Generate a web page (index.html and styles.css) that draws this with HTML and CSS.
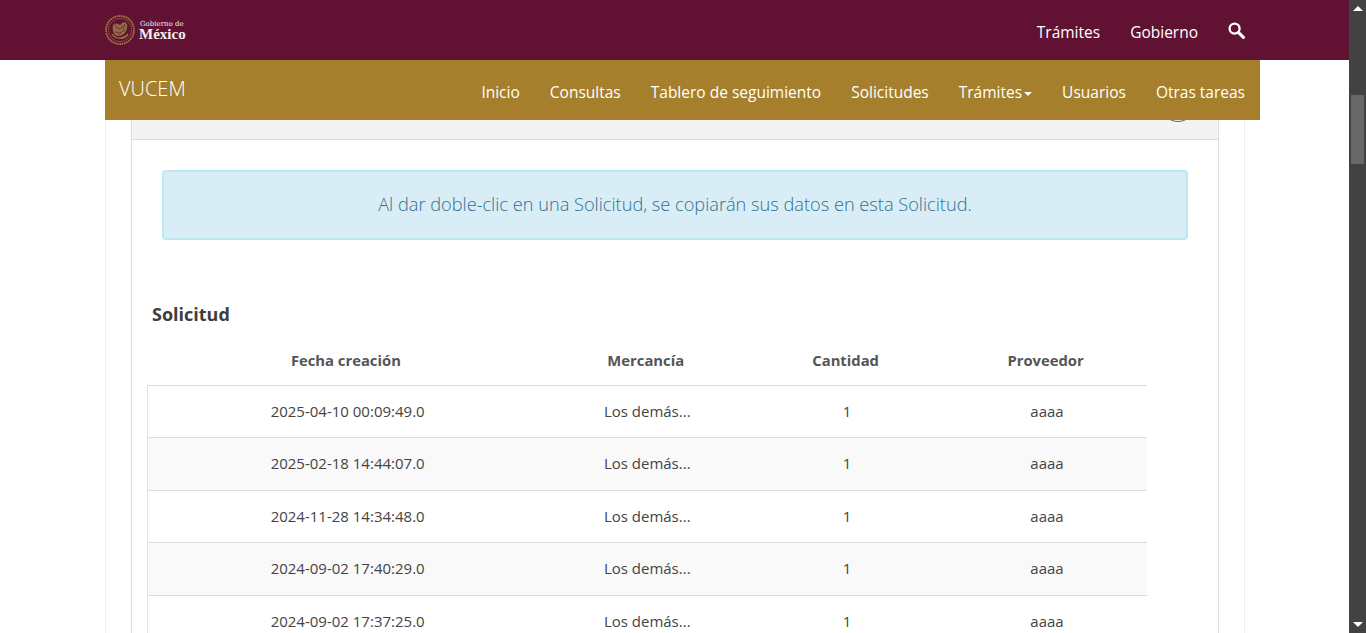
FILE: index.html
```html
<!DOCTYPE html>
<html lang="es">
<head>
  <meta charset="utf-8">
  <title>VUCEM</title>
  <link rel="stylesheet" href="styles.css">
</head>
<body>
  <div class="page">
    <header class="topbar">
      <div class="logo">
        <svg class="seal" width="30" height="30" viewBox="0 0 30 30">
          <circle cx="15" cy="15" r="14" fill="none" stroke="#a5793f" stroke-width="1.8" stroke-dasharray="1.6 .7"/>
          <circle cx="15" cy="15" r="11.6" fill="none" stroke="#7d5238" stroke-width="1"/>
          <path d="M8 10c3-3 5-1 7 0 2-3 5-4 7-1 1 4-1 8-3 10-3 2-6 3-9 1-2-3-3-6-2-10z" fill="#8f6a45"/>
          <path d="M11 12l4 2 3-3M10 17l5 1 5-3M13 21l3-3M9 9l3 3M20 9l-2 5" fill="none" stroke="#6d3a36" stroke-width="1"/>
          <path d="M7 19c3 5 12 6 16 0" fill="none" stroke="#a5793f" stroke-width="1.4"/>
        </svg>
        <div class="logo-text">
          <span class="logo-small">Gobierno de</span>
          <span class="logo-big">México</span>
        </div>
      </div>
      <nav class="topnav">
        <a>Trámites</a>
        <a>Gobierno</a>
        <svg class="search" width="17" height="17" viewBox="0 0 17 17">
          <circle cx="6.6" cy="6.6" r="5" fill="none" stroke="#fff" stroke-width="2.3"/>
          <path d="M10.4 10.4l5 5" stroke="#fff" stroke-width="3" stroke-linecap="round"/>
        </svg>
      </nav>
    </header>

    <div class="subbar">
      <span class="brand">VUCEM</span>
      <nav class="subnav">
        <a>Inicio</a>
        <a>Consultas</a>
        <a>Tablero de seguimiento</a>
        <a>Solicitudes</a>
        <a>Trámites<i class="caret"></i></a>
        <a>Usuarios</a>
        <a>Otras tareas</a>
      </nav>
    </div>

    <main class="content">
      <section class="panel">
        <div class="panel-head"><span class="round-btn"></span></div>
        <div class="panel-body">
          <div class="notice">Al dar doble-clic en una Solicitud, se copiarán sus datos en esta Solicitud.</div>
          <h3 class="table-title">Solicitud</h3>
          <table class="grid">
            <thead>
              <tr>
                <th class="col-wide">Fecha creación</th>
                <th>Mercancía</th>
                <th>Cantidad</th>
                <th>Proveedor</th>
              </tr>
            </thead>
            <tbody>
              <tr><td>2025-04-10 00:09:49.0</td><td>Los demás...</td><td>1</td><td>aaaa</td></tr>
              <tr><td>2025-02-18 14:44:07.0</td><td>Los demás...</td><td>1</td><td>aaaa</td></tr>
              <tr><td>2024-11-28 14:34:48.0</td><td>Los demás...</td><td>1</td><td>aaaa</td></tr>
              <tr><td>2024-09-02 17:40:29.0</td><td>Los demás...</td><td>1</td><td>aaaa</td></tr>
              <tr><td>2024-09-02 17:37:25.0</td><td>Los demás...</td><td>1</td><td>aaaa</td></tr>
            </tbody>
          </table>
        </div>
      </section>
    </main>
  </div>

  <div class="scrollbar">
    <i class="arrow-up"></i>
    <div class="track"><div class="thumb"></div></div>
    <i class="arrow-down"></i>
  </div>
</body>
</html>
```

FILE: styles.css
```css
* {
  box-sizing: border-box;
}
html, body {
  margin: 0;
  height: 633px;
  overflow: hidden;
}
body {
  display: flex;
  background: #fff;
  font-family: "Open Sans", sans-serif;
  font-size: 15px;
  color: #444;
}
.page {
  flex: 1;
  min-width: 0;
  overflow: hidden;
}

/* top maroon bar */
.topbar {
  height: 60px;
  background: #611232;
  padding: 0 104px 0 105px;
  display: flex;
  align-items: center;
  justify-content: space-between;
}
.logo {
  display: flex;
  align-items: center;
  gap: 4px;
}
.seal {
  display: block;
}
.logo-text {
  display: flex;
  flex-direction: column;
  color: #f4eef0;
}
.logo-small {
  font-family: "DejaVu Serif", serif;
  font-size: 7px;
  line-height: 8px;
  padding-left: 1px;
  white-space: nowrap;
}
.logo-big {
  font-family: "Liberation Serif", serif;
  font-size: 15px;
  font-weight: bold;
  line-height: 13px;
}
.topnav {
  display: flex;
  align-items: center;
  gap: 30px;
  color: #fff;
  font-size: 15.5px;
  padding-top: 4px;
}
.search {
  display: block;
  margin-bottom: 4px;
}

/* gold bar */
.subbar {
  width: 1155px;
  height: 60px;
  margin-left: 105px;
  background: #a57f2c;
  color: #fff;
  padding: 0 15px 0 14px;
  display: flex;
  justify-content: space-between;
  align-items: center;
}
.brand {
  font-size: 20px;
  font-weight: 300;
  margin-bottom: 4px;
}
.subnav {
  display: flex;
  gap: 30px;
  font-size: 15.5px;
  padding-top: 4px;
}
.caret {
  display: inline-block;
  margin-left: 2px;
  vertical-align: middle;
  border-top: 4px solid #fff;
  border-left: 4px solid transparent;
  border-right: 4px solid transparent;
}

/* main content */
.content {
  width: 1140px;
  margin-left: 105px;
  padding: 0 25px;
  border-left: 1px solid #eee;
  border-right: 1px solid #eee;
  height: 513px;
}
.panel {
  border-left: 1px solid #ddd;
  border-right: 1px solid #ddd;
  height: 100%;
}
.panel-head {
  position: relative;
  height: 20px;
  background: #f3f3f3;
  border-bottom: 1px solid #ddd;
  overflow: hidden;
}
.round-btn {
  position: absolute;
  right: 22px;
  bottom: 17px;
  width: 36px;
  height: 36px;
  border: 1.5px solid #666;
  border-radius: 50%;
}
.panel-body {
  padding: 30px 30px 0 15px;
}
.notice {
  height: 70px;
  margin-left: 15px;
  padding-bottom: 2px;
  background: #d9edf7;
  border: 2px solid #bce8f1;
  border-radius: 4px;
  color: #31708f;
  font-size: 18.2px;
  font-weight: 300;
  display: flex;
  align-items: center;
  justify-content: center;
}
.table-title {
  margin: 62px 0 9px 5px;
  font-size: 18px;
  line-height: 25px;
  font-weight: 700;
  color: #3d3d3d;
}
.grid {
  width: 1000px;
  border-collapse: collapse;
  table-layout: fixed;
  text-align: center;
}
.col-wide {
  width: 40%;
}
.grid th {
  height: 49px;
  padding: 0 3px 0 0;
  color: #555;
  font-size: 14.8px;
  font-weight: 700;
  border-bottom: 1px solid #ddd;
}
.grid td {
  height: 52.5px;
  border-top: 1px solid #ddd;
  padding: 0 0 1px;
}
.grid tbody tr {
  border-left: 1px solid #e4e4e4;
}
.grid tbody tr:nth-child(even) {
  background: #f9f9f9;
}

/* fake window scrollbar */
.scrollbar {
  width: 17px;
  flex: none;
  background: #424242;
  display: flex;
  flex-direction: column;
  align-items: center;
  padding: 6px 0;
}
.track {
  flex: 1;
  width: 100%;
  padding: 84px 2px 0;
}
.thumb {
  height: 69px;
  background: #686868;
}
.arrow-up {
  border-bottom: 5px solid #fff;
  border-left: 5px solid transparent;
  border-right: 5px solid transparent;
}
.arrow-down {
  border-top: 5px solid #fff;
  border-left: 5px solid transparent;
  border-right: 5px solid transparent;
}
```
